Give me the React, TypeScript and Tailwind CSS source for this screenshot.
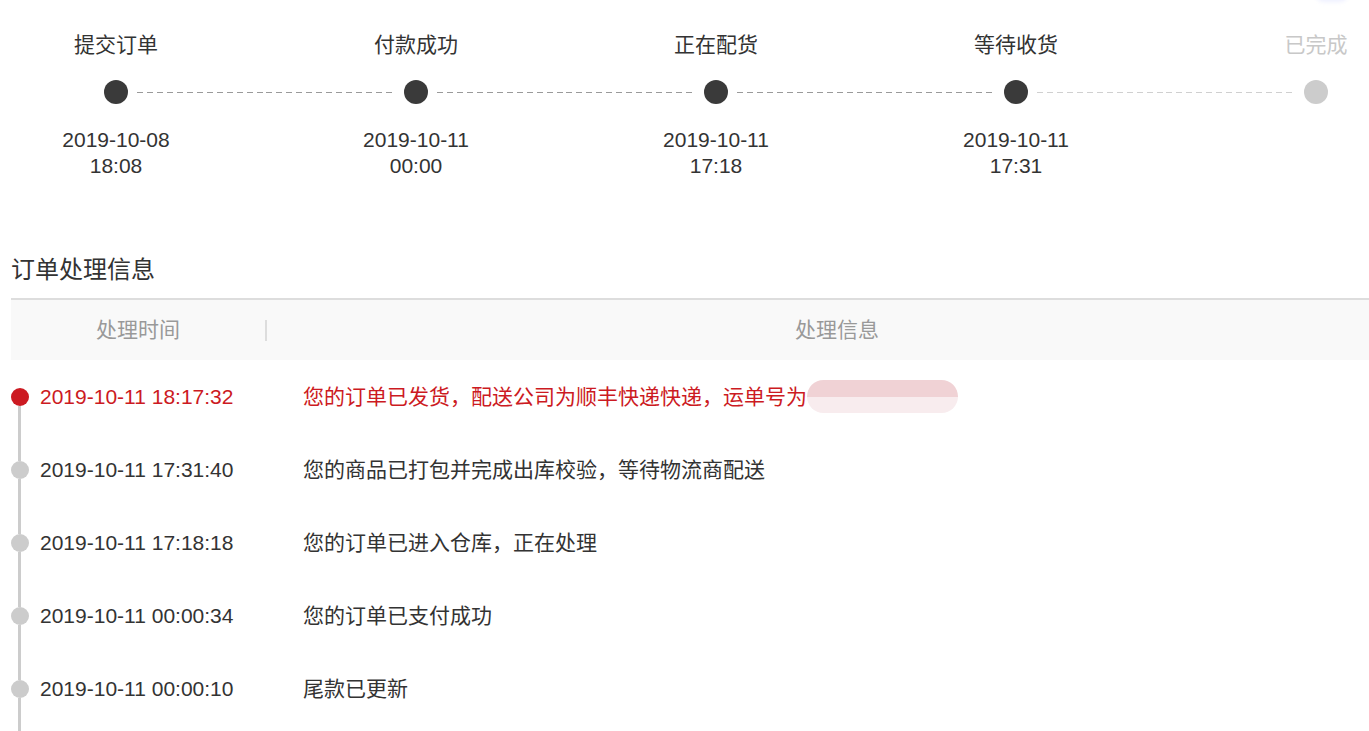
const steps = [
  { title: '提交订单', date: '2019-10-08', time: '18:08', done: true },
  { title: '付款成功', date: '2019-10-11', time: '00:00', done: true },
  { title: '正在配货', date: '2019-10-11', time: '17:18', done: true },
  { title: '等待收货', date: '2019-10-11', time: '17:31', done: true },
  { title: '已完成', date: '', time: '', done: false },
];

const logs = [
  { time: '2019-10-11 18:17:32', text: '您的订单已发货，配送公司为顺丰快递快递，运单号为', latest: true },
  { time: '2019-10-11 17:31:40', text: '您的商品已打包并完成出库校验，等待物流商配送', latest: false },
  { time: '2019-10-11 17:18:18', text: '您的订单已进入仓库，正在处理', latest: false },
  { time: '2019-10-11 00:00:34', text: '您的订单已支付成功', latest: false },
  { time: '2019-10-11 00:00:10', text: '尾款已更新', latest: false },
];

const darkDash = 'h-px bg-[repeating-linear-gradient(to_right,#9a9a9a_0_6px,transparent_6px_10px)]';
const lightDash = 'h-px bg-[repeating-linear-gradient(to_right,#d0d0d0_0_6px,transparent_6px_10px)]';

export default function App() {
  return (
    <div className="relative w-[1369px] h-[731px] overflow-hidden bg-white text-[#333] font-['Liberation_Sans','Noto_Sans_CJK_SC',sans-serif]">
      <div className="absolute left-[1316px] top-[-14px] w-[32px] h-[16px] rounded-full bg-[#eef0ff] blur-[2px]" />

      {/* 进度条 */}
      <div className="flex ml-[-34px] pt-[31px]">
        {steps.map((s, i) => {
          const next = steps[i + 1];
          return (
            <div key={s.title} className="w-[300px] shrink-0 flex flex-col items-center">
              <div className={`text-[21px] leading-[28px] ${s.done ? 'text-[#333]' : 'text-[#c8c8c8]'}`}>{s.title}</div>
              <div className="mt-[21px] w-full h-[24px] flex items-center">
                <div className={`flex-1 mr-[9px] ${i === 0 ? '' : s.done ? darkDash : lightDash}`} />
                <div className={`w-[24px] h-[24px] rounded-full ${s.done ? 'bg-[#3a3a3a]' : 'bg-[#cccccc]'}`} />
                <div className={`flex-1 ml-[9px] ${!next ? '' : next.done ? darkDash : lightDash}`} />
              </div>
              <div className="mt-[23px] h-[52px] text-[21px] leading-[26px] text-center">
                <div>{s.date}</div>
                <div>{s.time}</div>
              </div>
            </div>
          );
        })}
      </div>

      {/* 订单处理信息 */}
      <div className="mt-[75px] ml-[11px] text-[24px] leading-[32px] text-[#333]">订单处理信息</div>
      <div className="mt-[12px] ml-[11px] w-[1396px] border-t-2 border-[#dddddd] bg-[#f9f9f9] h-[62px] flex items-center text-[21px] text-[#999]">
        <div className="w-[254px] text-center">处理时间</div>
        <div className="w-[2px] h-[21px] bg-[#dddddd]" />
        <div className="flex-1 text-center">处理信息</div>
      </div>

      <div className="flex flex-col">
        {logs.map((l, i) => (
          <div key={l.time} className="h-[73px] flex items-stretch text-[21px]">
            <div className="w-[39px] flex flex-col items-center">
              <div className={`flex-1 w-[3px] ${i === 0 ? '' : 'bg-[#cccccc]'}`} />
              <div className={`w-[18px] h-[18px] rounded-full shrink-0 ${l.latest ? 'bg-[#cc1a22]' : 'bg-[#cccccc]'}`} />
              <div className="flex-1 w-[3px] bg-[#cccccc]" />
            </div>
            <div className={`ml-[1px] w-[263px] flex items-center ${l.latest ? 'text-[#cc1a22]' : 'text-[#333]'}`}>{l.time}</div>
            <div className={`flex items-center ${l.latest ? 'text-[#cc1a22]' : 'text-[#333]'}`}>
              <span>{l.text}</span>
              {l.latest && (
                <span className="w-[151px] h-[33px] rounded-full overflow-hidden flex flex-col">
                  <span className="flex-1 bg-[#f0d2d5]" />
                  <span className="flex-1 bg-[#f8ecee]" />
                </span>
              )}
            </div>
          </div>
        ))}
        <div className="h-[40px] w-[39px] flex justify-center">
          <div className="w-[3px] h-full bg-[#cccccc]" />
        </div>
      </div>
    </div>
  );
}
